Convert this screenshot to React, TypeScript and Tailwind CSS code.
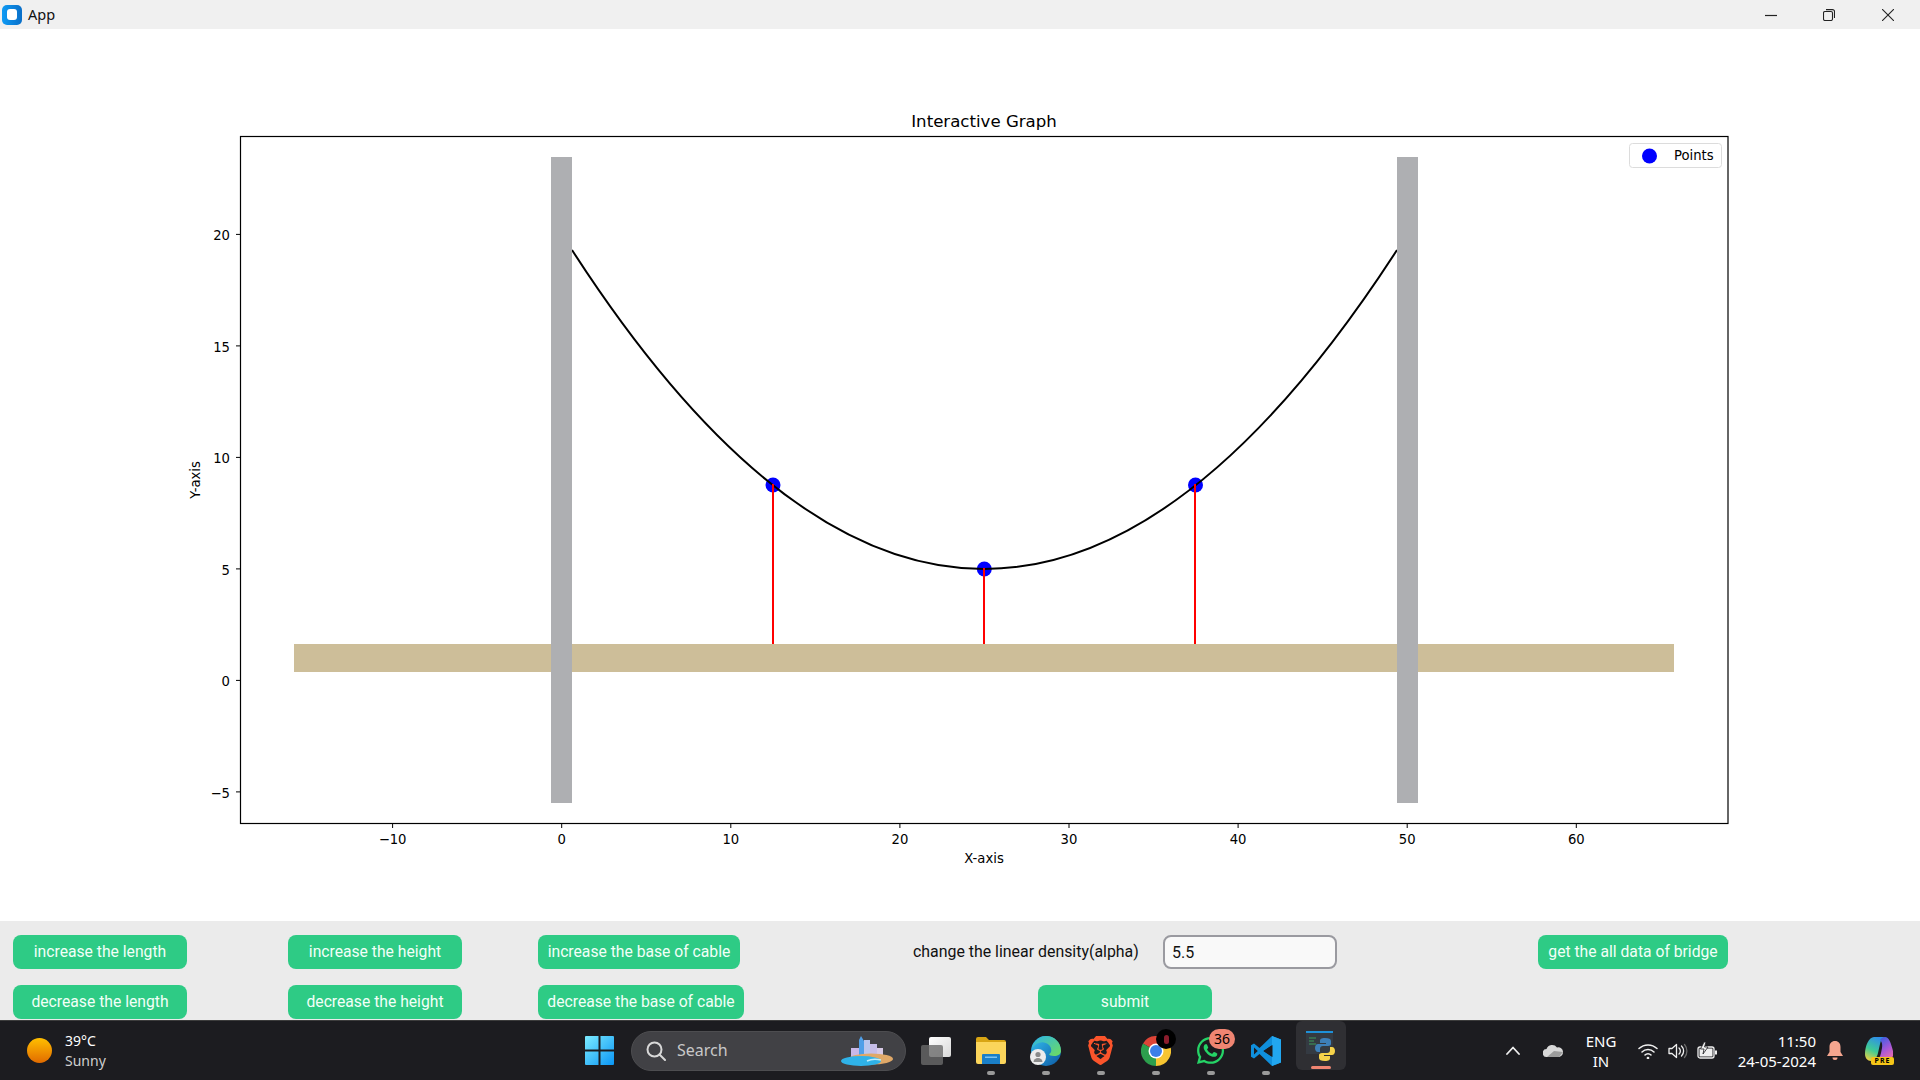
import React from 'react';
import { FaWhatsapp } from 'react-icons/fa';
import { SiBrave } from 'react-icons/si';

const xTicks = [-10, 0, 10, 20, 30, 40, 50, 60];
const yTicks = [20, 15, 10, 5, 0, -5];
const xPos = (v: number) => 561.7 + v * 16.91;
const yPos = (v: number) => 680.4 - v * 22.3;

const axisFont = '"DejaVu Sans", sans-serif';
const uiFont = '"Noto Sans", sans-serif';

const Graph: React.FC = () => (
  <svg width={1920} height={892} viewBox="0 29 1920 892" className="block">
    <g fontFamily={axisFont} fill="#000">
      <text x={984} y={127} fontSize={16.6} textAnchor="middle">Interactive Graph</text>
      <text x={984} y={862.5} fontSize={13.2} textAnchor="middle">X-axis</text>
      <text transform="translate(200 480) rotate(-90)" fontSize={13.2} textAnchor="middle">Y-axis</text>
    </g>

    {/* bridge */}
    <rect x={294} y={644} width={1380} height={28} fill="#cdbe99" />
    <circle cx={773} cy={485} r={7.5} fill="#0000ff" />
    <circle cx={984.3} cy={569} r={7.5} fill="#0000ff" />
    <circle cx={1195.5} cy={485} r={7.5} fill="#0000ff" />
    <path d="M572 250 Q984 888 1397 250" fill="none" stroke="#000" strokeWidth={2} />
    <path d="M773 484V644M984 568V644M1195 484V644" stroke="#ff0000" strokeWidth={2} />
    <rect x={551} y={157} width={21} height={646} fill="#aeafb2" />
    <rect x={1397} y={157} width={21} height={646} fill="#aeafb2" />

    <rect x={240.5} y={136.5} width={1487.5} height={687} fill="none" stroke="#000" strokeWidth={1.2} />

    {xTicks.map((t) => (
      <g key={t}>
        <line x1={xPos(t)} x2={xPos(t)} y1={823} y2={828} stroke="#000" strokeWidth={1} />
        <text x={xPos(t)} y={844} fontSize={13.2} fontFamily={axisFont} textAnchor="middle">
          {t < 0 ? `\u2212${-t}` : t}
        </text>
      </g>
    ))}
    {yTicks.map((t) => (
      <g key={t}>
        <line x1={236} x2={240} y1={yPos(t)} y2={yPos(t)} stroke="#000" strokeWidth={1} />
        <text x={230} y={yPos(t) + 6} fontSize={13.2} fontFamily={axisFont} textAnchor="end">
          {t < 0 ? `\u2212${-t}` : t}
        </text>
      </g>
    ))}

    {/* legend */}
    <rect x={1629.5} y={143.5} width={92} height={24} rx={3} fill="#fff" stroke="#dcdcdc" />
    <circle cx={1649.5} cy={156} r={7.5} fill="#0000ff" />
    <text x={1674} y={160} fontSize={13.2} fontFamily={axisFont}>Points</text>
  </svg>
);

const GreenButton: React.FC<{ label: string; className: string }> = ({ label, className }) => (
  <button
    className={`h-[34px] rounded-lg bg-[#2ecb85] text-[15.7px] text-[#f2fff8] whitespace-nowrap font-['Roboto',sans-serif] ${className}`}
  >
    {label}
  </button>
);

const Controls: React.FC = () => (
  <div className="h-[99px] bg-[#ebebeb] pl-[13px] pt-[14px] flex">
    <div className="flex flex-col gap-4 w-[174px]">
      <GreenButton label="increase the length" className="w-full" />
      <GreenButton label="decrease the length" className="w-full" />
    </div>
    <div className="flex flex-col gap-4 w-[174px] ml-[101px]">
      <GreenButton label="increase the height" className="w-full" />
      <GreenButton label="decrease the height" className="w-full" />
    </div>
    <div className="flex flex-col gap-4 ml-[76px] w-[206px]">
      <GreenButton label="increase the base of cable" className="w-[202px]" />
      <GreenButton label="decrease the base of cable" className="w-[206px]" />
    </div>
    <div className="flex flex-col gap-4 ml-[169px] w-[424px]">
      <div className="flex items-center h-[34px]">
        <span className="w-[250px] text-[15.9px] text-[#111] whitespace-nowrap font-['Roboto',sans-serif]">
          change the linear density(alpha)
        </span>
        <input
          readOnly
          value="5.5"
          className="w-[174px] h-[34px] rounded-lg border-2 border-[#9a9aa0] bg-[#f9f9f9] px-[7px] text-[16px] text-[#111] font-['Roboto',sans-serif] outline-none"
        />
      </div>
      <GreenButton label="submit" className="w-[174px] ml-[125px]" />
    </div>
    <div className="ml-[201px]">
      <GreenButton label="get the all data of bridge" className="w-[190px]" />
    </div>
  </div>
);

const StartIcon = () => (
  <svg width={29} height={29} viewBox="0 0 29 29">
    <defs>
      <linearGradient id="win" x1="0" y1="0" x2="1" y2="1">
        <stop offset="0" stopColor="#7cebff" />
        <stop offset="1" stopColor="#0a96f5" />
      </linearGradient>
    </defs>
    <path d="M1 0h12.5v13.5H0V1a1 1 0 0 1 1-1ZM15.5 0H28a1 1 0 0 1 1 1v12.5H15.5ZM0 15.5h13.5V29H1a1 1 0 0 1-1-1ZM15.5 15.5H29V28a1 1 0 0 1-1 1H15.5Z" fill="url(#win)" />
  </svg>
);

const SearchIsland = () => (
  <svg width={52} height={30} viewBox="0 0 52 30">
    <rect x={10} y={12} width={8} height={10} fill="#c9b8e8" />
    <path d="M18 18 L18 4 L20 0 L23 5 L23 22 H18Z" fill="#4f9fe8" />
    <rect x={23} y={4} width={6} height={18} fill="#b9c6ee" />
    <rect x={29} y={8} width={7} height={14} fill="#c6bde8" />
    <rect x={36} y={12} width={6} height={10} fill="#d7c9e6" />
    <ellipse cx={30} cy={23} rx={22} ry={5.5} fill="#e0a868" />
    <ellipse cx={20} cy={25} rx={20} ry={5} fill="#2fb2e8" />
    <path d="M26 25 q6 -3 14 -1" stroke="#bdeefc" strokeWidth={1.4} fill="none" />
  </svg>
);

const TaskViewIcon = () => (
  <span className="relative block w-[30px] h-[28px]">
    <span className="absolute left-[8px] top-0 w-[22px] h-[20px] rounded-[2px] bg-gradient-to-br from-white to-[#d8d8d8]" />
    <span className="absolute left-0 top-[8px] w-[22px] h-[20px] rounded-[2px] bg-[#6a6a6a]/80" />
  </span>
);

const FolderIcon = () => (
  <svg width={30} height={27} viewBox="0 0 30 27">
    <path d="M0 2a2 2 0 0 1 2-2h8l3 3h15a2 2 0 0 1 2 2v3H0Z" fill="#d9a514" />
    <path d="M0 5h30v20a2 2 0 0 1-2 2H2a2 2 0 0 1-2-2Z" fill="#fbd55b" />
    <path d="M6 18a1 1 0 0 1 1-1h16a1 1 0 0 1 1 1v9H6Z" fill="#1a7fc8" />
    <rect x={9} y={19.5} width={12} height={1.5} fill="#7cc4f2" />
  </svg>
);

const EdgeIcon = () => (
  <svg width={32} height={30} viewBox="0 0 32 30">
    <defs>
      <linearGradient id="edgeA" x1="0" y1="0" x2="1" y2="1">
        <stop offset="0" stopColor="#35c1f1" />
        <stop offset="1" stopColor="#0c59a4" />
      </linearGradient>
      <linearGradient id="edgeB" x1="0" y1="0" x2="1" y2="1">
        <stop offset="0" stopColor="#2bb5ea" />
        <stop offset="1" stopColor="#6fdc5c" />
      </linearGradient>
    </defs>
    <circle cx={16} cy={15} r={15} fill="url(#edgeA)" />
    <path d="M2 12C5 3 11 0 16 0c8 0 15 6 15 15 0 3-3 5-7 5-3 0-5-1-5-2 3-1 3-6 0-9C14 4 6 6 2 12Z" fill="url(#edgeB)" />
    <circle cx={8} cy={21} r={8} fill="#ececec" />
    <circle cx={8} cy={18.5} r={2.6} fill="#8a8a8a" />
    <path d="M3.5 26a4.5 4 0 0 1 9 0Z" fill="#8a8a8a" />
  </svg>
);

const ChromeIcon = () => (
  <svg width={30} height={30} viewBox="0 0 30 30">
    <path d="M15 15 2 7.5A15 15 0 0 1 28 7.5Z" fill="#dd4437" />
    <path d="M15 15 2 7.5A15 15 0 0 0 15 30Z" fill="#2c9f4d" />
    <path d="M15 15 15 30A15 15 0 0 0 28 7.5Z" fill="#f7c531" />
    <circle cx={15} cy={15} r={7.5} fill="#fff" />
    <circle cx={15} cy={15} r={6} fill="#3b7fe8" />
  </svg>
);

const VsCodeIcon = () => (
  <svg width={30} height={30} viewBox="0 0 30 30">
    <path d="M21 0 8.5 12 3 7.6 0 9.2v11.6l3 1.6 5.5-4.4L21 30l9-3.6V3.6ZM3 18.6v-7.2L6.8 15ZM21.5 21 12.5 15l9-6Z" fill="#0f8fdc" />
    <path d="M21 0l9 3.6v22.8L21 30Z" fill="#22a7f0" />
    <path d="M21.500 9v12l-9-6Z" fill="#1c1c20" />
  </svg>
);

const PythonApp = () => (
  <svg width={30} height={30} viewBox="0 0 30 30">
    <rect x={0} y={0} width={27} height={23} fill="#343a42" />
    <rect x={0} y={0} width={27} height={2} fill="#1e90d8" />
    <path d="M3 7h7M3 10h5M3 13h7" stroke="#3c9c5c" strokeWidth={1.2} />
    <path d="M19 7c-4 0-5 1-5 3v2h6v1h-8c-2 0-3 2-3 4s1 4 3 4h2v-3c0-2 1-3 3-3h5c2 0 3-1 3-2v-3c0-2-2-3-6-3Z" fill="#3d7fb8" />
    <path d="M19 30c4 0 5-1 5-3v-2h-6v-1h8c2 0 3-2 3-4s-1-4-3-4h-2v3c0 2-1 3-3 3h-5c-2 0-3 1-3 2v3c0 2 2 3 6 3Z" fill="#f5d24a" />
  </svg>
);

const TaskApp: React.FC<{ children: React.ReactNode }> = ({ children }) => (
  <div className="relative w-[55px] h-[59px] flex items-center justify-center">
    {children}
    <span className="absolute bottom-[5px] left-1/2 -ml-[4px] w-[8px] h-[4px] rounded-full bg-[#9a9a9a]" />
  </div>
);

const Taskbar: React.FC = () => (
  <div className={`h-[60px] relative flex items-center bg-[#1c1c20] border-t border-[#3c3c3c] text-white font-['Noto_Sans',sans-serif]`}>
    {/* weather */}
    <div className="w-[585px] flex items-center pl-[27px]">
      <span className="w-[25px] h-[25px] rounded-full bg-gradient-to-b from-[#ffbf00] to-[#e06a00]" />
      <div className="ml-[13px] text-[14px] leading-[20px]">
        <div>39°C</div>
        <div className="text-[#cfcfcf]">Sunny</div>
      </div>
    </div>

    <StartIcon />

    <div className="ml-[17px] w-[275px] h-[40px] rounded-full bg-[#414145] border border-[#4d4d50] flex items-center pl-[14px] pr-[12px]">
      <svg width={20} height={20} viewBox="0 0 20 20" fill="none" stroke="#d8d8d8" strokeWidth={2}>
        <circle cx={8.5} cy={8.5} r={7} />
        <path d="M13.5 13.5 19 19" strokeLinecap="round" />
      </svg>
      <span className="ml-[11px] -mt-[2px] text-[16px] text-[#c8c8c8] flex-1">Search</span>
      <SearchIsland />
    </div>

    <div className="ml-[15px] mr-[25px]">
      <TaskViewIcon />
    </div>

    <div className="flex -ml-[13px]">
      <TaskApp><FolderIcon /></TaskApp>
      <TaskApp><EdgeIcon /></TaskApp>
      <TaskApp><SiBrave size={29} color="#fb542b" /></TaskApp>
      <TaskApp>
        <ChromeIcon />
        <span className="absolute left-[28px] top-[8px] w-[20px] h-[20px] rounded-full bg-black flex items-center justify-center">
          <span className="w-[5px] h-[9px] rounded-full bg-[#8a1c2c]" />
        </span>
      </TaskApp>
      <TaskApp>
        <FaWhatsapp size={31} color="#25d366" />
        <span className="absolute left-[26px] top-[8px] w-[26px] h-[20px] rounded-full bg-[#ef8572] text-black text-[14px] leading-[20px] text-center">36</span>
      </TaskApp>
      <TaskApp><VsCodeIcon /></TaskApp>
      <div className="relative ml-[3px] w-[50px] h-[49px] rounded-md bg-[#2f2f33] flex items-center justify-center">
        <PythonApp />
        <span className="absolute bottom-[1px] left-[15px] w-[20px] h-[3px] rounded-full bg-[#ef8572]" />
      </div>
    </div>

    {/* tray */}
    <div className="ml-[160px] flex items-center h-full">
      <svg width={14} height={9} viewBox="0 0 14 9" fill="none" stroke="#efefef" strokeWidth={1.8} strokeLinecap="round" strokeLinejoin="round">
        <path d="M1 8l6-6.500L13 8" />
      </svg>
      <svg className="ml-[23px]" width={20} height={13} viewBox="0 0 20 13">
        <path d="M4 13a4 4 0 0 1-.5-8A6 6 0 0 1 14 3.5a4.6 4.6 0 0 1 6 4.5 5 5 0 0 1-4 5Z" fill="#d8d8d8" />
        <path d="M4 13h12l4-5-9-1Z" fill="#9c9c9c" />
      </svg>
      <div className="ml-[20px] w-[36px] text-center text-[15px] leading-[20px] whitespace-nowrap">
        <div>ENG</div>
        <div>IN</div>
      </div>
      <svg className="ml-[19px]" width={20} height={16} viewBox="0 0 20 16" fill="none" stroke="#f0f0f0" strokeWidth={1.5} strokeLinecap="round">
        <path d="M1 5.500a13 13 0 0 1 18 0M4 9a8.500 8.500 0 0 1 12 0M7 12a4 4 0 0 1 6 0" />
        <circle cx={10} cy={15} r={0.6} />
      </svg>
      <svg className="ml-[10px]" width={20} height={16} viewBox="0 0 20 16" fill="none" stroke="#f0f0f0" strokeWidth={1.3}>
        <path d="M1 5.500h3L8.500 1.500v13L4 10.500H1Z" strokeLinejoin="round" />
        <path d="M11 5a4 4 0 0 1 0 6M13.500 3a7 7 0 0 1 0 10" strokeLinecap="round" />
        <path d="M16.500 1.500a10 10 0 0 1 0 13" stroke="#6a6a6a" strokeLinecap="round" />
      </svg>
      <svg className="ml-[9px]" width={20} height={18} viewBox="0 0 20 18" fill="none">
        <rect x={1} y={5} width={16} height={11} rx={2} stroke="#f0f0f0" strokeWidth={1.3} />
        <rect x={2.5} y={6.5} width={13} height={8} fill="#f0f0f0" />
        <rect x={18} y={8.5} width={2} height={4} fill="#f0f0f0" />
        <path d="M7 0 3.500 7H7l-1 5 5-7H7.500L9 0Z" fill="#f0f0f0" stroke="#1c1c20" strokeWidth={0.8} />
      </svg>
      <div className="ml-[16px] w-[83px] text-right text-[15px] leading-[20px] whitespace-nowrap">
        <div>11:50</div>
        <div>24-05-2024</div>
      </div>
      <svg className="ml-[11px]" width={16} height={20} viewBox="0 0 16 20">
        <path d="M8 0c3.500 0 5.500 2.500 5.500 6v5l2.500 4H0l2.500-4V6C2.500 2.500 4.500 0 8 0Z" fill="#f5a68f" />
        <path d="M5.500 16.500a2.500 2.500 0 0 0 5 0Z" fill="#f5a68f" />
      </svg>
      <div className="relative ml-[22px] w-[30px] h-[28px]">
        <svg width={28} height={24} viewBox="0 0 28 24">
          <defs>
            <linearGradient id="copA" x1="0.6" y1="0" x2="0.2" y2="1">
              <stop offset="0" stopColor="#2f8fe8" />
              <stop offset="0.55" stopColor="#3ecb96" />
              <stop offset="1" stopColor="#f0d040" />
            </linearGradient>
            <linearGradient id="copB" x1="0.3" y1="0" x2="0.8" y2="1">
              <stop offset="0" stopColor="#3a5ee0" />
              <stop offset="0.55" stopColor="#a858d8" />
              <stop offset="1" stopColor="#f070a8" />
            </linearGradient>
          </defs>
          <path d="M9 0h11c-3 1-4 3-5 7l-2 9c-1 5-4 8-7 8-3.500 0-6-3-6-7C0 9 4 0 9 0Z" fill="url(#copA)" />
          <path d="M15 3c1-2 3-3 5-3 4 0 6 6 8 14 1 5-1 9-5 9H11c3-1 4-3 5-7l1-5c.5-4 0-6-2-8Z" fill="url(#copB)" />
        </svg>
        <span className="absolute left-[6px] top-[20px] w-[23px] h-[8px] rounded-[2px] bg-[#f5c518] text-black text-[7px] leading-[8px] font-bold text-center tracking-[1px]">PRE</span>
      </div>
    </div>
  </div>
);

const App: React.FC = () => {
  return (
    <div className="w-[1920px] h-[1080px] overflow-hidden bg-white" style={{ fontFamily: uiFont }}>
      {/* Title bar */}
      <div className="h-[29px] bg-[#f0f0f0] flex items-center">
        <span className="ml-[2px] w-[20px] h-[20px] rounded-[5px] bg-gradient-to-r from-[#0f9bf5] to-[#0a6fc8] flex items-center justify-center">
          <span className="w-[10px] h-[11px] rounded-[3px] bg-white" />
        </span>
        <span className="ml-[6px] text-[14.500px] text-[#111]">App</span>
        <div className="ml-auto flex items-center text-[#222]">
          <svg width={12} height={12} viewBox="0 0 12 12" className="mr-[46px]">
            <path d="M0 6.500h12" stroke="#222" strokeWidth={1.2} />
          </svg>
          <svg width={12} height={12} viewBox="0 0 12 12" fill="none" stroke="#222" strokeWidth={1.1} className="mr-[47px]">
            <rect x={0.5} y={2.5} width={9} height={9} rx={1.5} />
            <path d="M3 .6h6.500a2 2 0 0 1 2 2V9" />
          </svg>
          <svg width={12} height={12} viewBox="0 0 12 12" className="mr-[26px]">
            <path d="M0 0l12 12M12 0 0 12" stroke="#222" strokeWidth={1.1} />
          </svg>
        </div>
      </div>

      <Graph />
      <Controls />
      <Taskbar />
    </div>
  );
};

export default App;
